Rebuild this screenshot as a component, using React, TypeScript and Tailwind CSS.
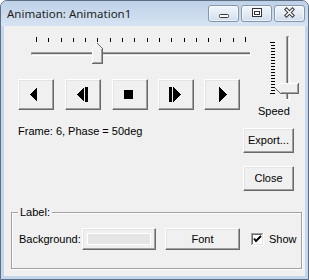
import React from "react";

const btn =
  "flex items-center justify-center bg-[#f0f0f0] border border-t-white border-l-white border-r-[#696969] border-b-[#696969] shadow-[inset_-1px_-1px_0_#a0a0a0,inset_1px_1px_0_#e3e3e3]";

function HSlider() {
  const ticks = Array.from({ length: 18 }, (_, i) => Math.round(12 + (i * 209) / 17));
  return (
    <svg width={232} height={32} shapeRendering="crispEdges" className="block">
      {ticks.map((x, i) => (
        <rect key={i} x={x} y={i === 0 || i === 17 ? 3 : 4} width={1} height={i === 0 || i === 17 ? 5 : 4} fill="#000" />
      ))}
      <rect x={7} y={18} width={220} height={1} fill="#a0a0a0" />
      <rect x={8} y={19} width={218} height={1} fill="#696969" />
      <rect x={8} y={20} width={218} height={1} fill="#e3e3e3" />
      <rect x={7} y={21} width={220} height={1} fill="#ffffff" />
      <rect x={7} y={18} width={1} height={3} fill="#a0a0a0" />
      <rect x={226} y={18} width={1} height={4} fill="#ffffff" />
      <polygon points="68,14 73,9 79,15 79,30 68,30" fill="#f0f0f0" />
      <polyline points="68.5,29 68.5,14.5 73.5,9.5" fill="none" stroke="#ffffff" />
      <polyline points="73.5,9.5 78.5,14.5 78.5,29.5 68,29.5" fill="none" stroke="#696969" />
      <polyline points="77.5,15 77.5,28.5 69,28.5" fill="none" stroke="#a0a0a0" />
    </svg>
  );
}

function VSlider() {
  const ticks = Array.from({ length: 18 }, (_, i) => 8 + i * 3);
  return (
    <svg width={34} height={68} shapeRendering="crispEdges" className="block">
      {ticks.map((y, i) => (
        <rect key={i} x={i === 0 || i === 17 ? 2 : 3} y={y} width={i === 0 || i === 17 ? 5 : 4} height={1} fill="#000" />
      ))}
      <rect x={18} y={2} width={1} height={64} fill="#a0a0a0" />
      <rect x={19} y={3} width={1} height={62} fill="#696969" />
      <rect x={20} y={3} width={1} height={62} fill="#e3e3e3" />
      <rect x={21} y={2} width={1} height={64} fill="#ffffff" />
      <rect x={18} y={2} width={3} height={1} fill="#a0a0a0" />
      <rect x={18} y={65} width={4} height={1} fill="#ffffff" />
      <polygon points="7,54 12,49 31,49 31,60 12,60" fill="#f0f0f0" />
      <polyline points="7.5,54.5 12.5,49.5 30,49.5" fill="none" stroke="#ffffff" />
      <polyline points="30.5,49 30.5,59.5 12.5,59.5 7.5,54.5" fill="none" stroke="#696969" />
      <polyline points="29.5,50 29.5,58.5 13,58.5" fill="none" stroke="#a0a0a0" />
    </svg>
  );
}

function MediaIcon({ kind }: { kind: number }) {
  return (
    <svg width={34} height={29} shapeRendering="crispEdges" className="block">
      {kind === 0 && <polygon points="18,7 18,22 10.5,14.5" fill="#000" />}
      {kind === 1 && (
        <>
          <polygon points="18,7 18,22 10.5,14.5" fill="#000" />
          <rect x={19} y={7} width={3} height={15} fill="#000" />
        </>
      )}
      {kind === 2 && <rect x={11} y={10} width={9} height={9} fill="#000" />}
      {kind === 3 && (
        <>
          <rect x={10} y={7} width={3} height={15} fill="#000" />
          <polygon points="14,7 14,22 21.5,14.5" fill="#000" />
        </>
      )}
      {kind === 4 && <polygon points="14,7 14,22 21.5,14.5" fill="#000" />}
    </svg>
  );
}

function CaptionButton({ children }: { children: React.ReactNode }) {
  return (
    <div className="w-[31px] h-[17px] rounded-[3px] border border-[#8595ab] bg-gradient-to-b from-[#f3f7fc] via-[#e3ebf5] to-[#d2deec] shadow-[inset_0_0_0_1px_rgba(255,255,255,0.6)] flex items-center justify-center">
      {children}
    </div>
  );
}

export default function App() {
  return (
    <div className="w-[309px] h-[280px] bg-[#c4d6eb] border border-[#5f6f84] rounded-t-[7px] flex flex-col overflow-hidden font-['Liberation_Sans',Arial,sans-serif] text-[11px] leading-[13px] text-black">
      {/* title bar */}
      <div className="h-[25px] flex bg-gradient-to-b from-[#bed1e7] to-[#d6e3f2]">
        <div className="pl-[6px] pt-[5px] font-['Noto_Sans',sans-serif] text-[11.5px] leading-[16px] text-[#1e1e1e]">
          Animation: Animation1
        </div>
        <div className="ml-auto mr-[3px] mt-[4px] flex gap-[2px]">
          <CaptionButton>
            <svg width={29} height={15} className="block">
              <rect x={10.5} y={8.5} width={9} height={3} rx={1} fill="#fff" stroke="#333" />
            </svg>
          </CaptionButton>
          <CaptionButton>
            <svg width={29} height={15} className="block" shapeRendering="crispEdges">
              <rect x={10.5} y={2.5} width={9} height={8} fill="#fff" stroke="#333" />
              <rect x={12.5} y={5.5} width={5} height={3} fill="#fff" stroke="#333" />
            </svg>
          </CaptionButton>
          <CaptionButton>
            <svg width={29} height={15} className="block">
              <path d="M11.5 3.5 L17.5 9.5 M17.5 3.5 L11.5 9.5" stroke="#3a3a3a" strokeWidth={3.5} strokeLinecap="square" />
              <path d="M11.5 3.5 L17.5 9.5 M17.5 3.5 L11.5 9.5" stroke="#fff" strokeWidth={1.5} strokeLinecap="square" />
            </svg>
          </CaptionButton>
        </div>
      </div>
      {/* client */}
      <div className="mx-[3px] mb-[3px] flex-1 bg-[#f0f0f0] flex flex-col">
        <div className="flex h-[92px]">
          <div className="flex flex-col w-[252px]">
            <div className="ml-[20px] mt-[8px]">
              <HSlider />
            </div>
            <div className="ml-[14px] mt-[13px] flex">
              {[0, 1, 2, 3, 4].map((k) => (
                <div
                  key={k}
                  className={`${btn} w-[36px] h-[31px] ${k === 1 || k === 2 ? "ml-[11px]" : k > 2 ? "ml-[10px]" : ""}`}
                >
                  <MediaIcon kind={k} />
                </div>
              ))}
            </div>
          </div>
          <div className="ml-[2px] flex flex-col">
            <div className="ml-[10px] mt-[8px]">
              <VSlider />
            </div>
            <div className="mt-[3px]">Speed</div>
          </div>
        </div>
        <div className="flex mt-[10px]">
          <div className="ml-[14px] -mt-[3px]">Frame: 6, Phase = 50deg</div>
          <div className="ml-auto mr-[11px] flex flex-col gap-[13px]">
            <div className={`${btn} w-[51px] h-[25px]`}>Export...</div>
            <div className={`${btn} w-[51px] h-[25px]`}>Close</div>
          </div>
        </div>
        <fieldset className="ml-[7px] mt-[15px] w-[291px] h-[63px] border border-[#a0a0a0] shadow-[inset_1px_1px_0_#fff,1px_1px_0_#fff]">
          <legend className="ml-[6px] px-[2px] bg-[#f0f0f0] leading-[13px]">Label:</legend>
          <div className="flex items-center pl-[7px] mt-[9px]">
            <div className="w-[63px]">Background:</div>
            <div className={`${btn} w-[74px] h-[22px] p-[4px]`}>
              <div className="w-full h-full bg-[#e5e5e5] border border-white" />
            </div>
            <div className={`${btn} w-[75px] h-[22px] ml-[9px]`}>Font</div>
            <svg width={13} height={13} className="ml-[11px] block" shapeRendering="crispEdges">
              <rect x={0} y={0} width={13} height={13} fill="#fff" />
              <rect x={0} y={0} width={12} height={1} fill="#a0a0a0" />
              <rect x={0} y={0} width={1} height={12} fill="#a0a0a0" />
              <rect x={1} y={1} width={10} height={1} fill="#696969" />
              <rect x={1} y={1} width={1} height={10} fill="#696969" />
              <rect x={1} y={11} width={11} height={1} fill="#e3e3e3" />
              <rect x={11} y={1} width={1} height={11} fill="#e3e3e3" />
              <rect x={0} y={12} width={13} height={1} fill="#fff" />
              <rect x={12} y={0} width={1} height={13} fill="#fff" />
              <polyline points="3,5.5 5,8 10,3" fill="none" stroke="#000" strokeWidth={2} shapeRendering="auto" />
            </svg>
            <div className="ml-[5px]">Show</div>
          </div>
        </fieldset>
      </div>
    </div>
  );
}
